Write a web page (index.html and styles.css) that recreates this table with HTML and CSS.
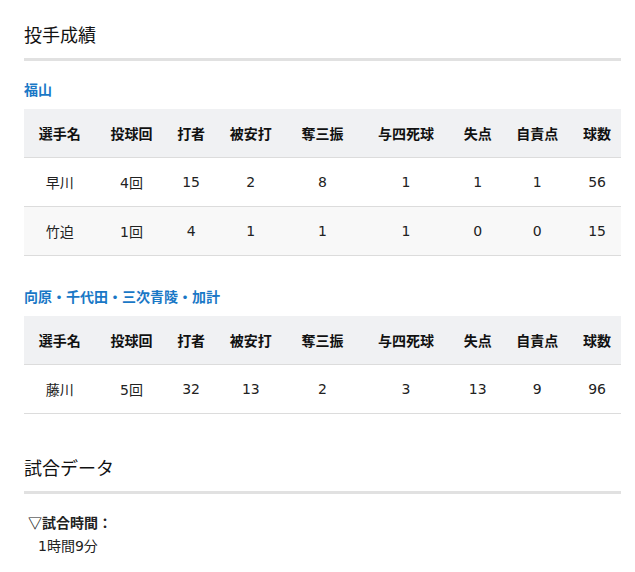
FILE: index.html
```html
<!DOCTYPE html>
<html lang="ja">
<head>
<meta charset="utf-8">
<link rel="stylesheet" href="styles.css">
</head>
<body>
<div class="page">
  <h2 class="sec-title first">投手成績</h2>
  <h3 class="team">福山</h3>
  <table class="stats">
    <thead>
      <tr><th>選手名</th><th>投球回</th><th>打者</th><th>被安打</th><th>奪三振</th><th>与四死球</th><th>失点</th><th>自責点</th><th>球数</th></tr>
    </thead>
    <tbody>
      <tr><td>早川</td><td>4回</td><td>15</td><td>2</td><td>8</td><td>1</td><td>1</td><td>1</td><td>56</td></tr>
      <tr><td>竹迫</td><td>1回</td><td>4</td><td>1</td><td>1</td><td>1</td><td>0</td><td>0</td><td>15</td></tr>
    </tbody>
  </table>
  <h3 class="team">向原・千代田・三次青陵・加計</h3>
  <table class="stats">
    <thead>
      <tr><th>選手名</th><th>投球回</th><th>打者</th><th>被安打</th><th>奪三振</th><th>与四死球</th><th>失点</th><th>自責点</th><th>球数</th></tr>
    </thead>
    <tbody>
      <tr><td>藤川</td><td>5回</td><td>32</td><td>13</td><td>2</td><td>3</td><td>13</td><td>9</td><td>96</td></tr>
    </tbody>
  </table>
  <h2 class="sec-title">試合データ</h2>
  <dl class="data">
    <dt>▽試合時間：</dt>
    <dd>1時間9分</dd>
  </dl>
</div>
</body>
</html>
```
FILE: styles.css
```css
html, body {
  margin: 0;
  padding: 0;
  background: #fff;
}
body {
  font-family: "DejaVu Sans", "Noto Sans CJK JP", sans-serif;
  color: #222;
}
.page {
  width: 597px;
  margin-left: 24px;
}
.sec-title {
  font-family: "Noto Sans CJK JP", sans-serif;
  font-size: 18px;
  font-weight: normal;
  line-height: 27px;
  margin: 40px 0 0;
  padding: 0 0 10px;
  border-bottom: 3px solid #e1e1e1;
  color: #111;
}
.sec-title.first {
  margin-top: 21px;
}
.team {
  font-family: "Noto Sans CJK JP", sans-serif;
  font-size: 14px;
  font-weight: bold;
  line-height: 20px;
  color: #1a78c6;
  margin: 18px 0 10px;
}
.stats + .team {
  margin-top: 30px;
}
.stats {
  width: 100%;
  border-collapse: collapse;
  font-size: 14px;
}
.stats th {
  font-family: "Noto Sans CJK JP", sans-serif;
  font-weight: bold;
  background: #f0f1f3;
  height: 48px;
  padding: 0;
  text-align: center;
  border-bottom: 1px solid #dcdcdc;
  color: #111;
}
.stats td {
  height: 48px;
  padding: 0;
  text-align: center;
  border-bottom: 1px solid #dcdcdc;
  color: #222;
}
.stats tbody tr:nth-child(even) td {
  background: #f8f8f8;
}
.data {
  margin: 16px 0 0 4px;
  font-size: 14px;
  line-height: 24px;
}
.data dt {
  font-family: "Noto Sans CJK JP", sans-serif;
  font-weight: bold;
}
.data dd {
  margin: 0 0 0 10px;
}
```
